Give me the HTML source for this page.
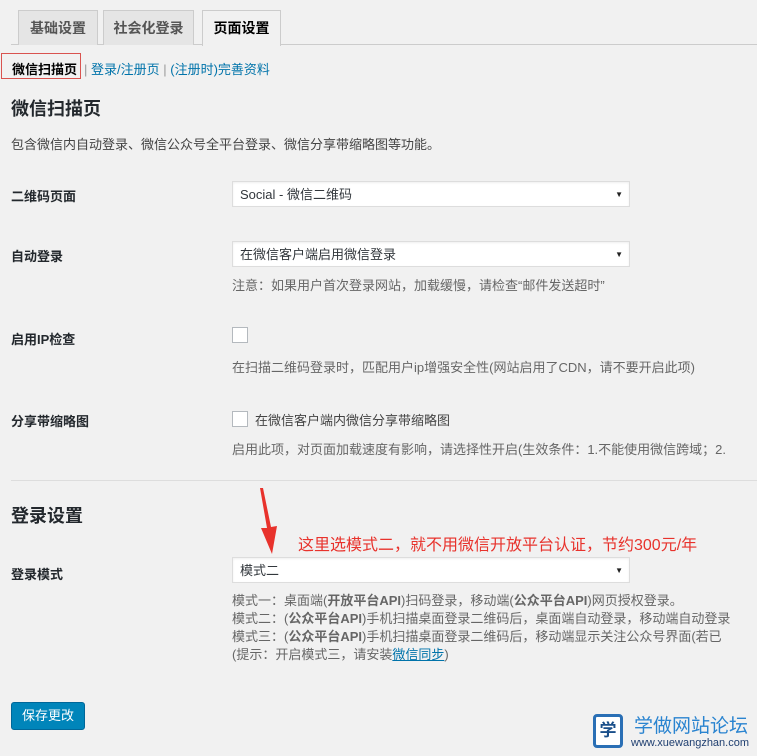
<!DOCTYPE html>
<html><head><meta charset="utf-8"><style>
body{margin:0;width:757px;height:756px;background:#f1f1f1;font-family:"Liberation Sans","Noto Sans CJK SC",sans-serif;font-size:13px;color:#444;position:relative;overflow:hidden}
.a{position:absolute;white-space:nowrap}
.tab{position:absolute;top:10px;height:34px;border:1px solid #ccc;border-bottom:none;background:#e5e5e5;font-weight:bold;font-size:14px;color:#555;line-height:34px;text-align:center}
.lbl{position:absolute;left:11px;font-weight:bold;font-size:13px;color:#23282d}
.sel{position:absolute;left:232px;width:398px;height:26px;background:#fff;border:1px solid #ddd;box-shadow:inset 0 1px 2px rgba(0,0,0,.07);font-size:13px;color:#32373c;line-height:26px;box-sizing:border-box;padding-left:7px}
.sel:after{content:"▼";position:absolute;right:6px;top:0;font-size:8px;color:#222}
.note{position:absolute;left:232px;font-size:13px;color:#666;white-space:nowrap}
.cb{position:absolute;left:232px;width:14px;height:14px;border:1px solid #b4b9be;background:#fff}
h2{position:absolute;left:11px;margin:0;font-size:18px;color:#23282d;font-weight:bold}
</style></head><body>
<div class="a" style="left:11px;top:44px;width:746px;height:1px;background:#ccc"></div>
<div class="tab" style="left:18px;width:78px">基础设置</div>
<div class="tab" style="left:103px;width:89px">社会化登录</div>
<div class="tab" style="left:202px;width:77px;background:#f1f1f1;color:#000;height:35px">页面设置</div>

<div class="a" style="left:1px;top:53px;width:80px;height:26px;border:1px solid #d9534f;box-sizing:border-box"></div>
<div class="a" style="left:12px;top:59px;font-weight:bold;color:#000">微信扫描页</div>
<div class="a" style="left:84px;top:59px;color:#0073aa"><span style="color:#999">|</span> 登录/注册页 <span style="color:#999">|</span> (注册时)完善资料</div>

<h2 style="top:95px">微信扫描页</h2>
<div class="a" style="left:11px;top:134px;color:#444">包含微信内自动登录、微信公众号全平台登录、微信分享带缩略图等功能。</div>

<div class="lbl" style="top:186px">二维码页面</div>
<div class="sel" style="top:181px">Social - 微信二维码</div>

<div class="lbl" style="top:246px">自动登录</div>
<div class="sel" style="top:241px">在微信客户端启用微信登录</div>
<div class="note" style="top:275px">注意：如果用户首次登录网站，加载缓慢，请检查“邮件发送超时”</div>

<div class="lbl" style="top:329px">启用IP检查</div>
<div class="cb" style="top:327px"></div>
<div class="note" style="top:357px">在扫描二维码登录时，匹配用户ip增强安全性(网站启用了CDN，请不要开启此项)</div>

<div class="lbl" style="top:411px">分享带缩略图</div>
<div class="cb" style="top:411px"></div>
<div class="a" style="left:255px;top:410px;color:#444">在微信客户端内微信分享带缩略图</div>
<div class="note" style="top:439px">启用此项，对页面加载速度有影响，请选择性开启(生效条件：1.不能使用微信跨域；2.</div>

<div class="a" style="left:11px;top:480px;width:746px;height:1px;background:#ddd"></div>
<h2 style="top:502px">登录设置</h2>

<svg class="a" style="left:255px;top:488px" width="30" height="68"><polygon points="5,0 12,40 6,40 17,66 22,38 16,39 8,0" fill="#e8322c"/></svg>
<div class="a" style="left:298px;top:531px;color:#e8322c;font-size:16px">这里选模式二，就不用微信开放平台认证，节约300元/年</div>

<div class="lbl" style="top:564px">登录模式</div>
<div class="sel" style="top:557px">模式二</div>
<div class="note" style="top:592px;line-height:18px">模式一：桌面端(<b>开放平台API</b>)扫码登录，移动端(<b>公众平台API</b>)网页授权登录。<br>模式二：(<b>公众平台API</b>)手机扫描桌面登录二维码后，桌面端自动登录，移动端自动登录<br>模式三：(<b>公众平台API</b>)手机扫描桌面登录二维码后，移动端显示关注公众号界面(若已<br>(提示：开启模式三，请安装<a style="color:#0073aa;text-decoration:underline">微信同步</a>)</div>

<div class="a" style="left:11px;top:702px;width:74px;height:28px;background:#0085ba;border:1px solid #006799;box-sizing:border-box;border-radius:3px;color:#fff;line-height:26px;text-align:center;font-size:13px">保存更改</div>

<div class="a" style="left:593px;top:714px;width:30px;height:34px;border:3px solid #2a6fb5;border-radius:4px;box-sizing:border-box;background:#fff;color:#1a4f8a;font-weight:bold;font-size:17px;line-height:28px;text-align:center">学</div>
<div class="a" style="left:634px;top:711px;color:#2a84d0;font-size:19px">学做网站论坛</div>
<div class="a" style="left:631px;top:737px;color:#1f3f70;font-size:11px">www.xuewangzhan.com</div>
</body></html>
